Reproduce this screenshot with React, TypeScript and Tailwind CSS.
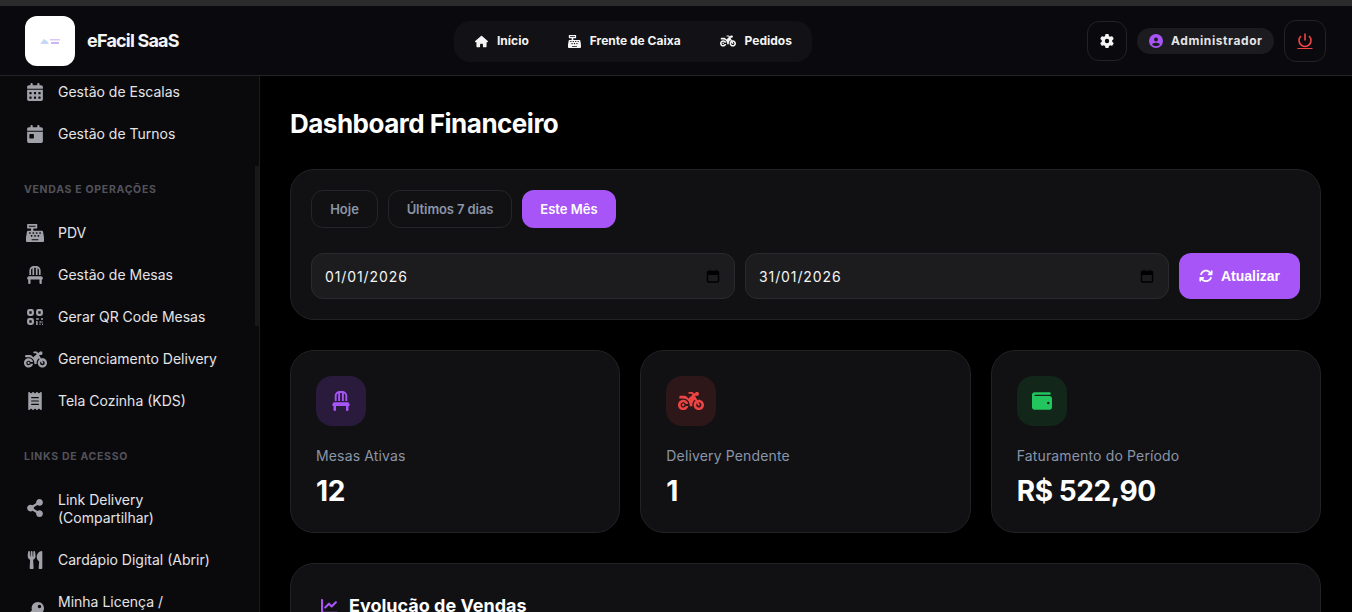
import type { ReactNode } from 'react';
import { FaCashRegister, FaKey, FaShareAlt, FaUtensils } from 'react-icons/fa';
import {
  FaCalendarDay,
  FaChair,
  FaChartLine,
  FaGear,
  FaHouse,
  FaMotorcycle,
  FaReceipt,
  FaArrowsRotate,
  FaCircleUser,
  FaWallet,
  FaCalendarDays,
} from 'react-icons/fa6';

function QrIcon() {
  return (
    <svg width="16" height="16" viewBox="0 0 16 16" fill="none" stroke="currentColor" strokeWidth="2.3">
      <rect x="1.2" y="1.2" width="4.6" height="4.6" rx="1.2" />
      <rect x="10.2" y="1.2" width="4.6" height="4.6" rx="1.2" />
      <rect x="1.2" y="10.2" width="4.6" height="4.6" rx="1.2" />
      <path d="M9.2 10h2.6M14 10h2M9.9 12v4M12.5 13h1.4M15 12.5v1M12.5 15.2h1M15 15.2h1" strokeWidth="1.5" />
    </svg>
  );
}

function NavRow({ icon, children }: { icon: ReactNode; children: ReactNode }) {
  return (
    <div className="flex items-center gap-[13px] px-[25px] py-[11px] mb-[2px] text-[14px] leading-[18px] text-[#e4e4e7]">
      <span className="w-[20px] h-[18px] shrink-0 flex items-center justify-center text-[18px] text-[#a1a1aa]">{icon}</span>
      <span>{children}</span>
    </div>
  );
}

function SectionLabel({ children }: { children: ReactNode }) {
  return (
    <div className="mt-[28px] mb-[15px] px-[24px] text-[10.5px] leading-[16px] font-bold tracking-[0.7px] text-[#52525b]">
      {children}
    </div>
  );
}

function TopLink({ icon, children }: { icon: ReactNode; children: ReactNode }) {
  return (
    <div className="flex items-center gap-[9px] text-[12px] font-bold text-[#f4f4f5]">
      <span className="text-[13px]">{icon}</span>
      {children}
    </div>
  );
}

function DateField({ value }: { value: string }) {
  return (
    <div className="flex-1 h-[46px] flex items-center justify-between pl-[13px] pr-[14px] rounded-[12px] border border-[#2a2a2e] bg-[#1c1c1f] text-[14px] text-[#f4f4f5] tracking-[0.9px]">
      {value}
      <svg width="14" height="14" viewBox="0 0 14 14" fill="none" className="text-black">
        <rect x="1.5" y="2.5" width="11" height="10.5" rx="1" stroke="currentColor" strokeWidth="1.4" />
        <path d="M1.5 3h11v2.5h-11zM4 .8v2M10 .8v2" stroke="currentColor" strokeWidth="1.2" fill="currentColor" />
      </svg>
    </div>
  );
}

function StatCard({
  icon,
  iconClass,
  label,
  value,
}: {
  icon: ReactNode;
  iconClass: string;
  label: string;
  value: string;
}) {
  return (
    <div className="h-[183px] rounded-[24px] border border-[#222225] bg-[#111113] p-[25px]">
      <div className={`w-[50px] h-[50px] rounded-[16px] flex items-center justify-center text-[20px] ${iconClass}`}>
        {icon}
      </div>
      <div className="mt-[20px] text-[14px] leading-[20px] tracking-[0.15px] text-[#8b95a8]">{label}</div>
      <div className="mt-[7px] text-[28px] leading-[36px] font-bold tracking-[-0.4px] text-white">{value}</div>
    </div>
  );
}

export default function App() {
  return (
    <div className="h-[612px] w-[1352px] overflow-hidden bg-black flex flex-col font-['Inter',sans-serif]">
      <div className="h-[6px] shrink-0 bg-[#2b2b2b]" />

      {/* Header */}
      <header className="h-[70px] shrink-0 flex items-center pl-[25px] pr-[26px] bg-[#0a0a0e] border-b border-[#232326]">
        <div className="w-[429px] flex items-center gap-[12px]">
          <div className="w-[50px] h-[50px] rounded-[12px] bg-white flex items-center justify-center">
            <svg width="22" height="8" viewBox="0 0 22 8">
              <path d="M1 7l4-5 3 2 2 3z" fill="#c7d8f5" />
              <rect x="11" y="2" width="10" height="1.5" fill="#d9c8f5" />
              <rect x="12" y="5" width="8" height="2" fill="#c9b8f0" />
            </svg>
          </div>
          <div className="text-[18px] font-bold text-[#f4f4f5] tracking-[-0.8px]">eFacil SaaS</div>
        </div>

        <nav className="h-[41px] w-[358px] mt-[1px] rounded-[16px] bg-[#121216] flex items-center gap-[39px] pl-[21px]">
          <TopLink icon={<FaHouse />}>Início</TopLink>
          <TopLink icon={<FaCashRegister />}>Frente de Caixa</TopLink>
          <TopLink icon={<FaMotorcycle className="text-[16px]" />}>Pedidos</TopLink>
        </nav>

        <div className="ml-auto flex items-center">
          <div className="w-[40px] h-[40px] rounded-[12px] border border-[#232326] flex items-center justify-center text-[14px] text-[#f4f4f5]">
            <FaGear />
          </div>
          <div className="ml-[10px] h-[26px] w-[137px] rounded-full bg-[#1c1c20] flex items-center gap-[8px] pl-[12px] text-[12px] font-bold text-[#e4e4e7] tracking-[0.6px]">
            <FaCircleUser className="text-[14px] text-[#a855f7]" />
            Administrador
          </div>
          <div className="ml-[10px] w-[42px] h-[42px] rounded-[12px] border border-[#232326] flex items-center justify-center">
            <svg width="18" height="18" viewBox="0 0 18 18" fill="none" stroke="#ef4444" strokeWidth="1.6">
              <path d="M9 1.5v7" />
              <path d="M5 4a6 6 0 1 0 8 0" />
              <path d="M1.5 16.5h15" strokeWidth="1" />
            </svg>
          </div>
        </div>
      </header>

      <div className="flex-1 min-h-0 flex">
        {/* Sidebar */}
        <aside className="relative w-[260px] shrink-0 overflow-hidden bg-[#0a0a0c] border-r border-[#1c1c1f]">
          <div className="-mt-[4px]">
            <NavRow icon={<FaCalendarDays />}>Gestão de Escalas</NavRow>
            <NavRow icon={<FaCalendarDay />}>Gestão de Turnos</NavRow>
            <SectionLabel>VENDAS E OPERAÇÕES</SectionLabel>
            <NavRow icon={<FaCashRegister />}>PDV</NavRow>
            <NavRow icon={<FaChair />}>Gestão de Mesas</NavRow>
            <NavRow icon={<QrIcon />}>Gerar QR Code Mesas</NavRow>
            <NavRow icon={<FaMotorcycle className="shrink-0 text-[23px]" />}>Gerenciamento Delivery</NavRow>
            <NavRow icon={<FaReceipt />}>Tela Cozinha (KDS)</NavRow>
            <SectionLabel>LINKS DE ACESSO</SectionLabel>
            <NavRow icon={<FaShareAlt className="-mt-[2px]" />}>
              Link Delivery
              <br />
              (Compartilhar)
            </NavRow>
            <NavRow icon={<FaUtensils />}>Cardápio Digital (Abrir)</NavRow>
            <NavRow icon={<FaKey />}>
              Minha Licença /
              <br />
              Assinatura
            </NavRow>
          </div>
          {/* scroll thumb */}
          <div className="absolute right-0 top-[90px] w-[4px] h-[160px] bg-[#18181b]" />
        </aside>

        {/* Main */}
        <main className="flex-1 min-w-0 overflow-hidden pl-[30px] pr-[31px]">
          <h1 className="mt-[30px] text-[26px] leading-[36px] font-bold text-white tracking-[-0.5px]">
            Dashboard Financeiro
          </h1>

          <section className="mt-[27px] h-[151px] rounded-[24px] border border-[#222225] bg-[#111113] px-[20px] pt-[20px]">
            <div className="flex gap-[10px] text-[13px] font-semibold">
              <div className="h-[38px] w-[67px] pt-[1px] flex items-center justify-center rounded-[12px] border border-[#25252a] text-[#8b95a8]">
                Hoje
              </div>
              <div className="h-[38px] w-[124px] pt-[1px] flex items-center justify-center rounded-[12px] border border-[#25252a] text-[#8b95a8] tracking-[-0.1px]">
                Últimos 7 dias
              </div>
              <div className="h-[38px] w-[94px] pt-[1px] flex items-center justify-center rounded-[12px] bg-[#a855f7] text-white">
                Este Mês
              </div>
            </div>
            <div className="mt-[25px] flex items-center gap-[10px]">
              <DateField value="01/01/2026" />
              <DateField value="31/01/2026" />
              <button className="h-[46px] w-[121px] rounded-[12px] bg-[#a855f7] flex items-center justify-center gap-[8px] text-[14px] font-bold text-white font-['Liberation_Sans',sans-serif]">
                <FaArrowsRotate className="text-[14px]" />
                Atualizar
              </button>
            </div>
          </section>

          <section className="mt-[30px] grid grid-cols-3 gap-[20px]">
            <StatCard
              icon={<FaChair />}
              iconClass="bg-[#2a1b3d] text-[#a855f7]"
              label="Mesas Ativas"
              value="12"
            />
            <StatCard
              icon={<FaMotorcycle className="text-[26px]" />}
              iconClass="bg-[#2d1719] text-[#ef4444]"
              label="Delivery Pendente"
              value="1"
            />
            <StatCard
              icon={<FaWallet />}
              iconClass="bg-[#12261a] text-[#22c55e]"
              label="Faturamento do Período"
              value="R$ 522,90"
            />
          </section>

          <section className="mt-[30px] h-[200px] rounded-[24px] border border-[#222225] bg-[#111113] pl-[30px] pt-[29px]">
            <div className="flex items-center gap-[11px] text-[18px] leading-[26px] font-bold text-white">
              <FaChartLine className="text-[17px] text-[#a855f7]" />
              Evolução de Vendas
            </div>
          </section>
        </main>
      </div>
    </div>
  );
}
